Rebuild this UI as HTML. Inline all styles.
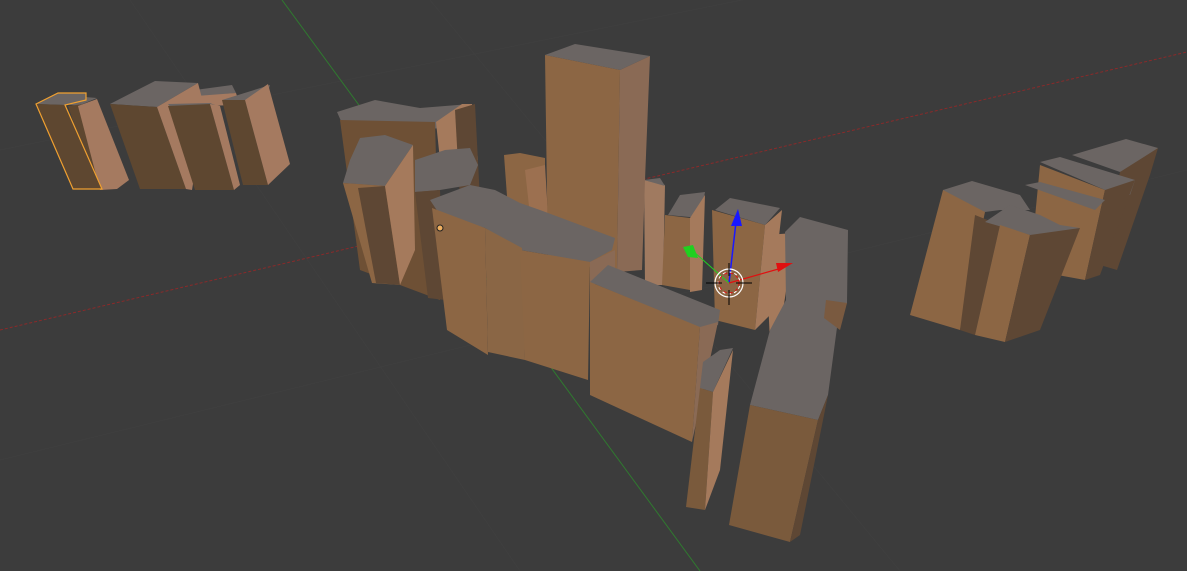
<!DOCTYPE html>
<html><head><meta charset="utf-8"><style>
html,body{margin:0;padding:0;background:#3c3c3c;overflow:hidden}
svg{display:block}
</style></head><body>
<svg width="1187" height="571" viewBox="0 0 1187 571" xmlns="http://www.w3.org/2000/svg">
<rect width="1187" height="571" fill="#3c3c3c"/>
<g stroke="#3f3f3f" stroke-width="1">
<line x1="0" y1="150" x2="1187" y2="-90"/>
<line x1="0" y1="460" x2="1187" y2="170"/>
<line x1="130" y1="0" x2="520" y2="571"/>
<line x1="430" y1="0" x2="900" y2="571"/>
</g>
<line x1="0" y1="330" x2="1187" y2="52" stroke="#8a2a2a" stroke-width="1" stroke-dasharray="3,2"/>
<line x1="282" y1="0" x2="700" y2="571" stroke="#2f7a2f" stroke-width="1"/>

<g>
<polygon points="195,90 232,85 236,93 196,97" fill="#6b6563"/>
<polygon points="196,96 236,93 240,105 200,106" fill="#a57a60"/>
<polygon points="110,104 155,81 198,83 157,107" fill="#6b6563"/>
<polygon points="110,104 157,107 186,189 140,189" fill="#5e4730"/>
<polygon points="157,107 198,83 205,110 192,190 186,189" fill="#a57a60"/>
<polygon points="168,104 210,103 215,105 172,109" fill="#6b6563"/>
<polygon points="168,106 210,104 234,190 195,190" fill="#5e4730"/>
<polygon points="210,104 220,106 240,185 234,190" fill="#a57a60"/>
<polygon points="222,100 270,85 268,92 245,100" fill="#6b6563"/>
<polygon points="222,100 245,100 268,185 243,185" fill="#5e4730"/>
<polygon points="245,100 268,84 290,164 268,185" fill="#a57a60"/>
<polygon points="65,104 85,97 97,98 78,106" fill="#6b6563"/>
<polygon points="68,106 84,104 104,190 96,189" fill="#5e4730"/>
<polygon points="78,106 97,99 129,180 117,189 100,190" fill="#a57a60"/>
<polygon points="36,104 58,93 86,93 86,100 65,105" fill="#6b6563"/>
<polygon points="36,104 65,105 102,189 73,189" fill="#5e4730"/>
<polygon points="36,104 58,93 86,93 86,100 65,105 102,189 73,189" fill="none" stroke="#f0a030" stroke-width="1.2"/>
</g>

<g>
<polygon points="337,112 375,100 420,108 470,104 462,126 420,130 345,130" fill="#6b6563"/>
<polygon points="340,120 435,122 440,300 360,270" fill="#6e5035"/>
<polygon points="436,122 462,104 472,104 478,160 440,160" fill="#a57a5c"/>
<polygon points="455,110 475,104 480,200 460,200" fill="#5e4734"/>
<polygon points="343,183 350,160 360,138 385,135 413,145 385,186" fill="#6b6563"/>
<polygon points="343,183 385,186 400,285 372,283" fill="#8c6644"/>
<polygon points="358,188 385,186 400,285 376,283" fill="#5e4734"/>
<polygon points="385,186 413,145 415,250 400,285" fill="#a57a5c"/>
<polygon points="415,160 445,150 470,148 478,165 470,185 440,190 415,192" fill="#6b6563"/>
<polygon points="415,192 440,190 445,300 428,298" fill="#5e4734"/>
</g>

<g>
<polygon points="504,155 520,153 545,158 545,215 508,210" fill="#8c6644"/>
<polygon points="525,170 545,165 548,215 530,215" fill="#9c7050"/>
<polygon points="644,180 665,185 663,285 645,285" fill="#a07a60"/>
<polygon points="644,180 660,178 665,186" fill="#6b6563"/>
</g>

<g>
<polygon points="545,55 575,44 650,56 620,70" fill="#6b6563"/>
<polygon points="545,55 620,70 617,270 548,262" fill="#8c6644"/>
<polygon points="620,70 650,56 645,180 642,270 617,272" fill="#8a6a55"/>
</g>

<g>
<polygon points="668,215 680,195 705,192 700,218" fill="#6b6563"/>
<polygon points="665,215 690,218 690,290 662,285" fill="#8c6644"/>
<polygon points="690,218 705,195 702,290 690,292" fill="#a57a5c"/>
<polygon points="715,210 730,198 780,208 765,225" fill="#6b6563"/>
<polygon points="712,210 765,225 755,330 715,320" fill="#8c6644"/>
<polygon points="765,225 782,210 770,315 755,330" fill="#a57a5c"/>
</g>

<g>
<polygon points="430,200 470,185 495,190 520,203 540,210 615,238 612,250 590,262 520,250 485,228 440,215" fill="#6b6563"/>
<polygon points="432,208 485,228 488,355 447,330" fill="#8c6644"/>
<polygon points="485,228 522,248 525,360 488,352" fill="#8a6645"/>
<polygon points="520,250 590,262 588,380 525,360" fill="#8c6644"/>
<polygon points="590,262 615,250 615,270 605,272 590,290" fill="#8a6a55"/>
</g>

<g>
<polygon points="765,235 795,233 780,330 770,342" fill="#a57a5c"/>
<polygon points="785,232 800,217 848,230 847,303 838,320 828,395 818,420 750,405 770,330 786,300" fill="#6b6563"/>
<polygon points="826,300 847,303 840,330 824,318" fill="#7a5a40"/>
<polygon points="750,405 818,420 790,542 729,525" fill="#7a5a3c"/>
<polygon points="818,420 828,395 800,535 790,542" fill="#5e4734"/>
</g>

<g>
<polygon points="590,282 608,265 720,310 718,325 700,328" fill="#6b6563"/>
<polygon points="590,282 700,327 692,442 590,395" fill="#8c6644"/>
<polygon points="700,327 718,322 712,350 692,442" fill="#8a6a55"/>
</g>

<g>
<polygon points="703,362 720,350 733,348 713,392 700,388" fill="#6b6563"/>
<polygon points="700,388 713,392 705,510 686,507" fill="#7a5a3c"/>
<polygon points="713,392 733,350 720,470 705,510" fill="#a57a5c"/>
</g>

<g>
<polygon points="1072,155 1126,139 1158,148 1145,163 1120,172" fill="#6b6563"/>
<polygon points="1120,172 1158,148 1150,175 1117,270 1100,265" fill="#5e4734"/>
<polygon points="1040,162 1060,157 1135,180 1130,195 1105,190" fill="#6b6563"/>
<polygon points="1040,165 1105,190 1085,280 1030,270" fill="#8c6644"/>
<polygon points="1105,190 1135,180 1100,275 1085,280" fill="#5e4734"/>
<polygon points="1025,185 1040,182 1105,200 1095,210" fill="#6b6563"/>
<polygon points="943,190 972,181 1020,195 1030,210 1000,210 985,212 945,210" fill="#6b6563"/>
<polygon points="943,190 985,212 960,330 910,315" fill="#8c6644"/>
<polygon points="975,215 1000,225 975,335 960,330" fill="#5e4734"/>
<polygon points="985,222 1010,205 1040,215 1060,225 1080,228 1050,240 1030,235" fill="#6b6563"/>
<polygon points="1000,225 1030,235 1005,342 975,335" fill="#8c6644"/>
<polygon points="1030,235 1080,228 1040,330 1005,342" fill="#5e4734"/>
</g>

<circle cx="440" cy="228" r="3" fill="#f0b060" stroke="#222" stroke-width="1"/>

<g>
<line x1="729" y1="283" x2="736" y2="222" stroke="#1818ff" stroke-width="1.5"/>
<polygon points="731,226 738,209 742,226" fill="#1818ff"/>
<line x1="729" y1="283" x2="694" y2="252" stroke="#20d020" stroke-width="1"/>
<polygon points="683,247 693,245 698,258 688,257" fill="#20d020"/>
<line x1="729" y1="283" x2="782" y2="268" stroke="#e01010" stroke-width="1.2"/>
<polygon points="776,263 793,263 778,272" fill="#e01010"/>
<circle cx="729" cy="283" r="14" fill="none" stroke="#fff" stroke-width="1.2"/>
<circle cx="729" cy="283" r="10" fill="none" stroke="#e01010" stroke-width="1" stroke-dasharray="3,3"/>
<circle cx="729" cy="283" r="11" fill="none" stroke="#fff" stroke-width="1" stroke-dasharray="3,3" stroke-dashoffset="3"/>
<line x1="706" y1="283" x2="722" y2="283" stroke="#000" stroke-width="1"/>
<line x1="736" y1="283" x2="752" y2="283" stroke="#000" stroke-width="1"/>
<line x1="729" y1="263" x2="729" y2="276" stroke="#000" stroke-width="1"/>
<line x1="729" y1="290" x2="729" y2="305" stroke="#000" stroke-width="1"/>
</g>
</svg>
</body></html>
